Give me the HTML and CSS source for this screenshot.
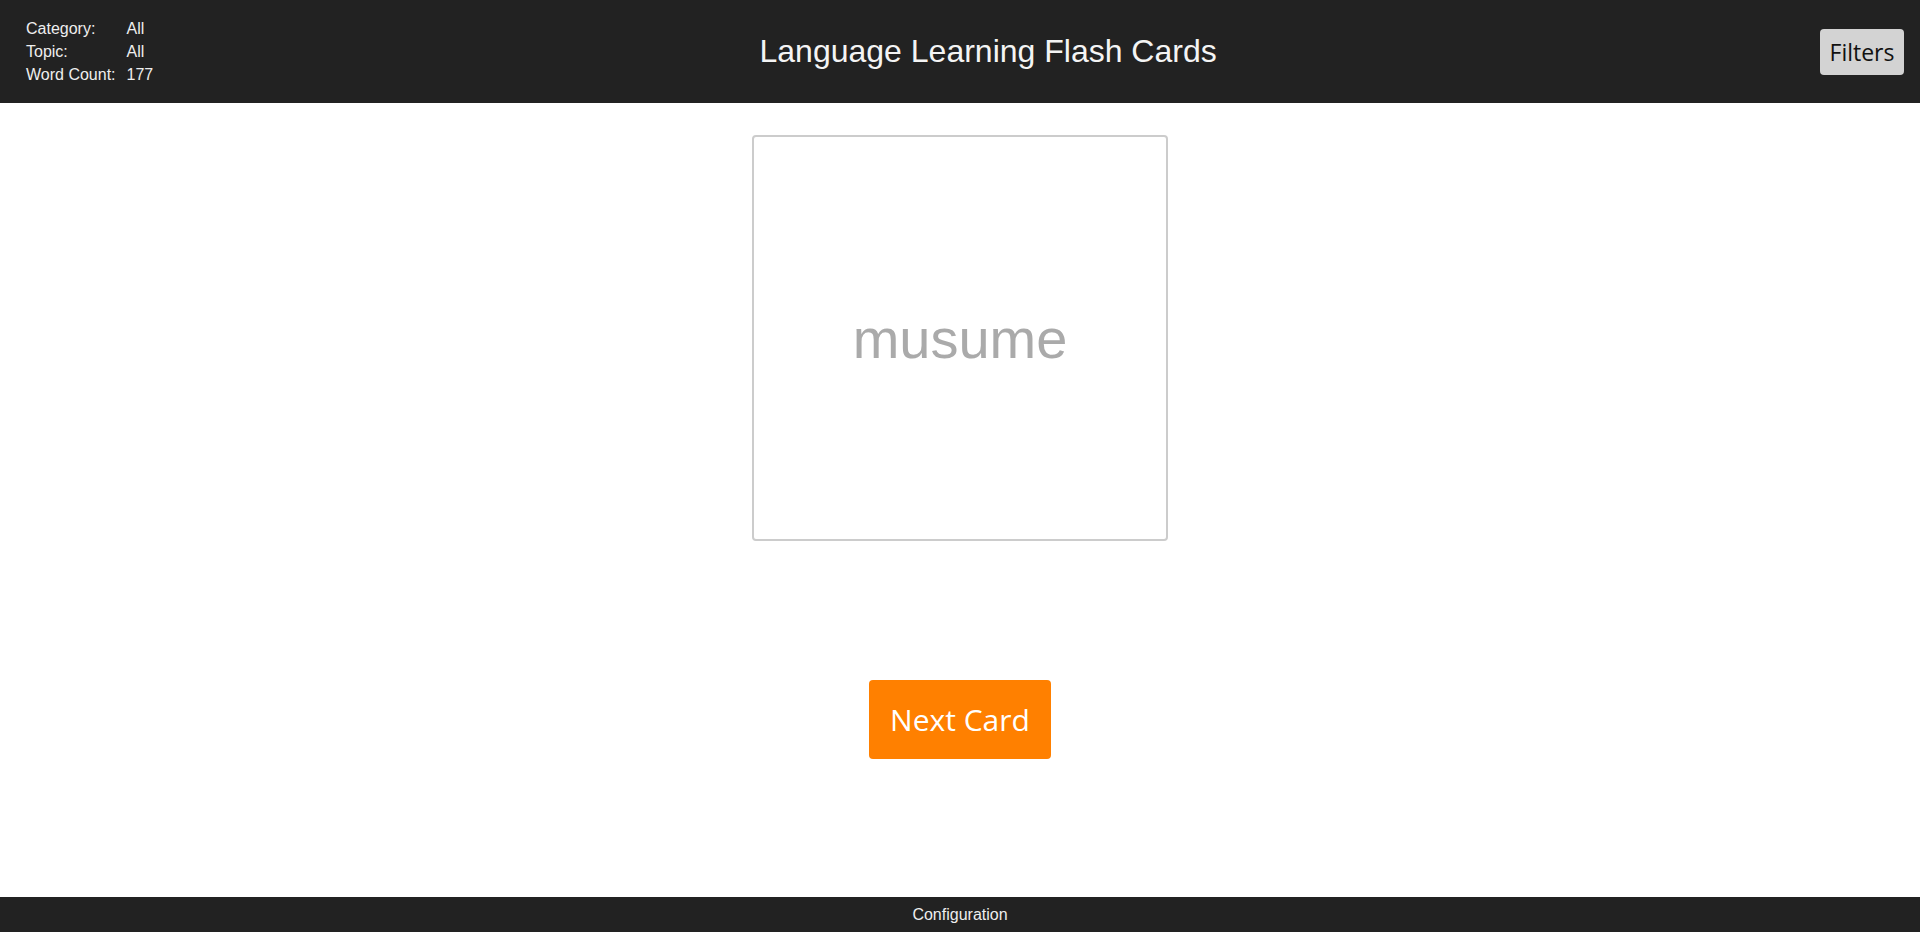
FILE: index.html
```html
<!DOCTYPE html>
<html lang="en">
<head>
<meta charset="utf-8">
<title>Language Learning Flash Cards</title>
<link rel="stylesheet" href="styles.css">
</head>
<body>
<header class="topbar">
  <div class="stats">
    <span class="stat-label">Category:</span><span class="stat-value">All</span>
    <span class="stat-label">Topic:</span><span class="stat-value">All</span>
    <span class="stat-label">Word Count:</span><span class="stat-value">177</span>
  </div>
  <h1 class="title">Language Learning Flash Cards</h1>
  <button class="filters-btn" type="button">Filters</button>
</header>
<main class="content">
  <div class="card">
    <span class="card-word">musume</span>
  </div>
  <button class="next-btn" type="button">Next Card</button>
</main>
<footer class="footer">Configuration</footer>
</body>
</html>
```

FILE: styles.css
```css
* {
  box-sizing: border-box;
}

html, body {
  margin: 0;
  padding: 0;
  height: 100%;
}

body {
  display: flex;
  flex-direction: column;
  height: 100vh;
  font-family: "Liberation Sans", Arial, sans-serif;
  font-size: 16px;
  background: #ffffff;
  color: #222;
}

.topbar {
  flex: 0 0 103px;
  height: 103px;
  background: #222222;
  color: #eeeeee;
  display: flex;
  align-items: center;
  justify-content: space-between;
  padding: 0 16px;
}

.stats {
  display: grid;
  grid-template-columns: auto auto;
  grid-auto-rows: 23px;
  align-items: center;
  column-gap: 11px;
  padding: 0 3px 0 10px;
  line-height: normal;
}

.title {
  margin: 0;
  font-size: 32px;
  font-weight: normal;
  line-height: normal;
  color: #f4f4f4;
}

.filters-btn {
  width: 84px;
  height: 46px;
  padding: 0;
  border: none;
  border-radius: 4px;
  background: #d3d3d3;
  color: #111;
  font-family: "Open Sans", "Noto Sans", sans-serif;
  font-size: 23px;
  cursor: pointer;
}

.content {
  flex: 1 1 auto;
  display: flex;
  flex-direction: column;
  align-items: center;
  padding-top: 32px;
}

.card {
  width: 416px;
  height: 406px;
  border: 2px solid #cccccc;
  border-radius: 4px;
  display: flex;
  align-items: center;
  justify-content: center;
  background: #fff;
}

.card-word {
  font-size: 56px;
  color: #aaaaaa;
  line-height: normal;
}

.next-btn {
  margin-top: 139px;
  width: 182px;
  height: 79px;
  padding: 0;
  border: none;
  border-radius: 4px;
  background: #ff8000;
  color: #ffffff;
  font-family: "Open Sans", "Noto Sans", sans-serif;
  font-size: 30px;
  cursor: pointer;
}

.footer {
  flex: 0 0 35px;
  height: 35px;
  background: #222222;
  color: #eeeeee;
  display: flex;
  align-items: center;
  justify-content: center;
  font-size: 16px;
}
```
